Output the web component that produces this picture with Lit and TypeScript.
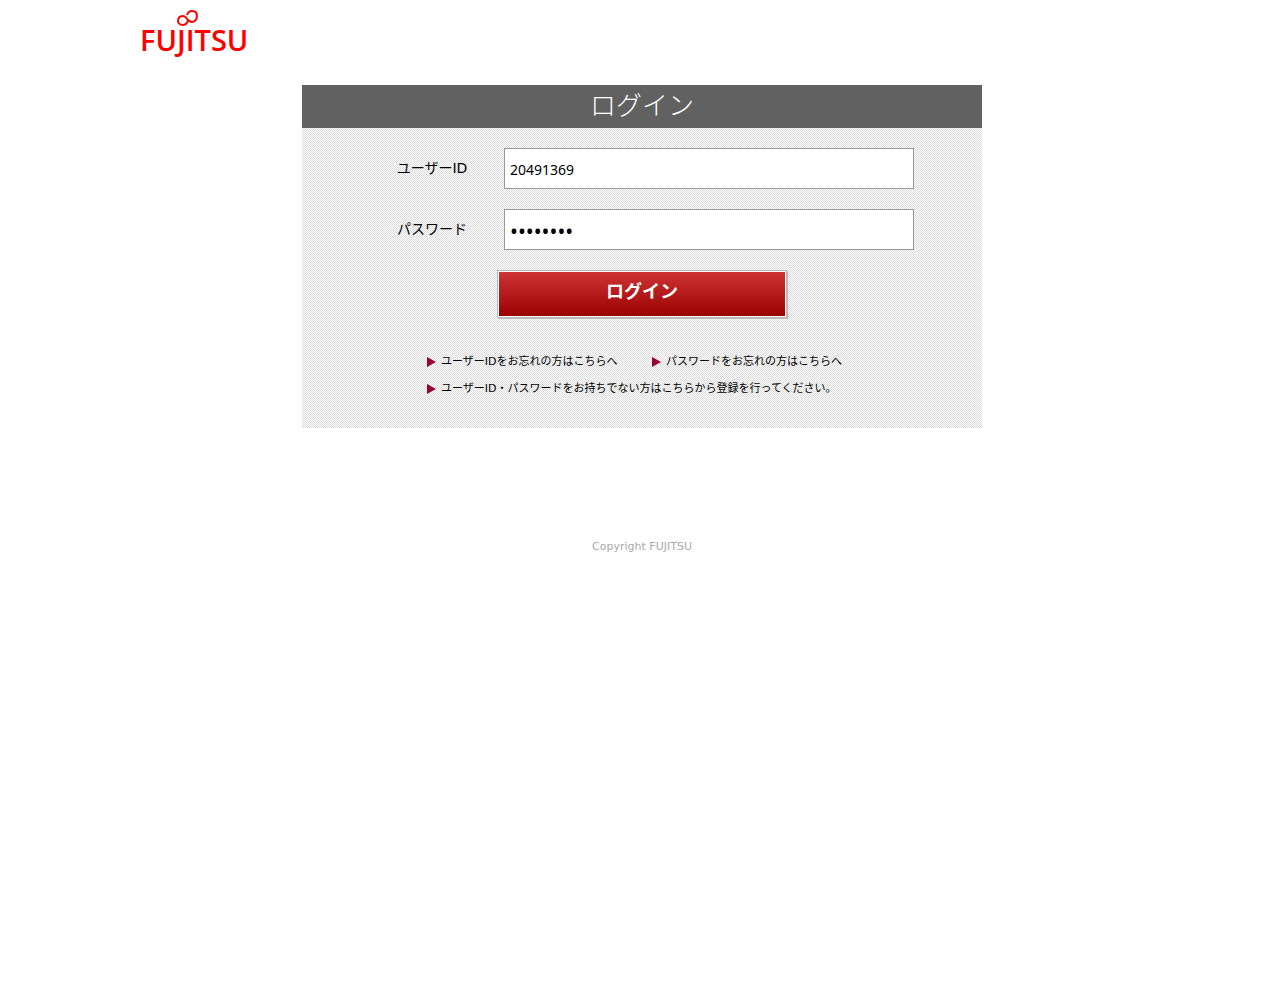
import { LitElement, html, css } from "lit";
import { customElement, state } from "lit/decorators.js";

@customElement("app-root")
export class AppRoot extends LitElement {
  static styles = css`
    :host {
      display: block;
      background: #fff;
      color: #000;
      font-family: "Noto Sans", "Noto Sans CJK JP", sans-serif;
      font-size: 14px;
      line-height: 20px;
    }
    * {
      box-sizing: border-box;
    }
    .header {
      max-width: 1000px;
      margin: 0 auto;
      padding: 8px 0 21px;
    }
    .logo {
      display: block;
      overflow: visible;
    }
    .wordmark {
      font-family: "Open Sans", sans-serif;
      font-size: 29px;
      font-weight: 600;
      fill: #f00;
    }
    .panel {
      max-width: 680px;
      margin: 0 auto;
      padding-bottom: 29px;
      background: repeating-conic-gradient(#dadada 0 25%, #fff 0 50%) 0 0 / 2px 2px;
    }
    .title {
      margin: 0;
      padding-bottom: 5px;
      background: #616161;
      color: #fff;
      font-size: 26px;
      line-height: 38px;
      font-weight: 300;
      font-family: "Noto Sans CJK JP", sans-serif;
      text-align: center;
    }
    .fields {
      display: grid;
      grid-template-columns: 144px minmax(0, 410px);
      row-gap: 20px;
      align-items: center;
      padding: 20px 68px 20px 58px;
    }
    .label {
      padding-bottom: 2px;
      text-align: center;
      font-family: "DejaVu Sans", "Noto Sans CJK JP", sans-serif;
    }
    .input {
      width: 100%;
      height: 41px;
      padding: 2px 5px 0;
      border: 1px solid #999;
      border-radius: 0;
      background: #fff;
      color: #000;
      font: inherit;
      outline: none;
    }
    .input[type="password"] {
      font-size: 21px;
    }
    .submit {
      display: block;
      width: 290px;
      height: 48px;
      margin: 0 auto;
      padding: 0 0 8px;
      border: 1px solid #bbb;
      border-radius: 0;
      background: linear-gradient(#cf3535, #900);
      box-shadow: inset 0 0 0 1px #fff, 1px 1px 0 #bbb;
      color: #fff;
      font: bold 18px/24px "Noto Sans CJK JP", sans-serif;
      cursor: pointer;
    }
    .links {
      display: flex;
      flex-wrap: wrap;
      gap: 7px 30px;
      margin: 0;
      padding: 34px 110px 0 125px;
      list-style: none;
      font-size: 11px;
      font-family: "DejaVu Sans", "Noto Sans CJK JP", sans-serif;
    }
    .item {
      min-width: 195px;
    }
    .link {
      display: flex;
      align-items: center;
      gap: 5px;
      color: #000;
      text-decoration: none;
      white-space: nowrap;
    }
    .footer {
      padding-top: 109px;
      color: #aaa;
      font-family: "DejaVu Sans", sans-serif;
      font-size: 11px;
      text-align: center;
    }
  `;

  @state() private userId = "20491369";
  @state() private password = "password";

  private links = [
    "ユーザーIDをお忘れの方はこちらへ",
    "パスワードをお忘れの方はこちらへ",
    "ユーザーID・パスワードをお持ちでない方はこちらから登録を行ってください。",
  ];

  render() {
    return html`
      <header class="header">
        <svg class="logo" width="110" height="56" viewBox="0 0 110 56" role="img" aria-label="FUJITSU">
          <path
            d="M45 7 C46 4 48 3 50 3 C53 3 55 5 55 8 C55 12 52 14 50 14 C45 14 45 8 41 8 C38 8 36 10 36 13 C36 15 38 17 41 17 C43 17 45 15 46 13"
            fill="none"
            stroke="#f00"
            stroke-width="2"
          />
          <text class="wordmark" x="-2" y="43">FUJITSU</text>
        </svg>
      </header>
      <main>
        <form class="panel" @submit=${(e: Event) => e.preventDefault()}>
          <h1 class="title">ログイン</h1>
          <div class="fields">
            <label class="label" for="user">ユーザーID</label>
            <input
              class="input"
              id="user"
              type="text"
              .value=${this.userId}
              @input=${(e: Event) => (this.userId = (e.target as HTMLInputElement).value)}
            />
            <label class="label" for="pass">パスワード</label>
            <input
              class="input"
              id="pass"
              type="password"
              .value=${this.password}
              @input=${(e: Event) => (this.password = (e.target as HTMLInputElement).value)}
            />
          </div>
          <button class="submit" type="submit">ログイン</button>
          <ul class="links">
            ${this.links.map(
              (text) => html`<li class="item">
                <a class="link" href="#">
                  <svg width="9" height="10" viewBox="0 0 9 10" aria-hidden="true">
                    <path d="M0 0 L9 5 L0 10 Z" fill="#903" />
                  </svg>
                  ${text}
                </a>
              </li>`
            )}
          </ul>
        </form>
      </main>
      <footer class="footer">Copyright FUJITSU</footer>
    `;
  }
}
